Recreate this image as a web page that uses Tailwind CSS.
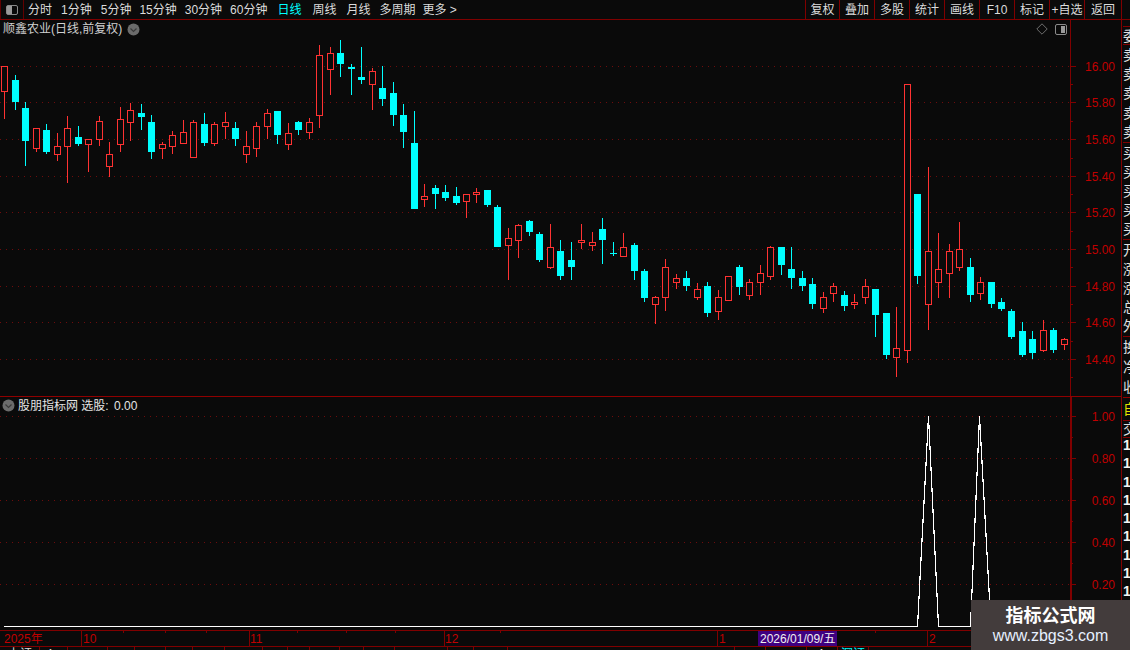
<!DOCTYPE html>
<html lang="zh">
<head>
    <meta charset="UTF-8">
    <title>顺鑫农业</title>
    <script src="https://cdn.jsdelivr.net/npm/@tailwindcss/browser@4"></script>
</head>
<body class="bg-[#0a0a0a]">
<div class="relative w-[1130px] h-[650px] overflow-hidden flex flex-col bg-[#0a0a0a] text-[12px] leading-none text-[#dcdcdc] font-['Liberation_Sans','Noto_Sans_CJK_SC',sans-serif]">

    <!-- toolbar -->
    <div class="h-[20px] shrink-0 flex items-center border-b border-[#800000]">
        <div class="w-[24px] h-full flex items-center justify-center border-x border-[#600000]">
            <div class="w-[12px] h-[10px] rounded-[2px] border border-[#8a8a8a] pr-[5px]"><div class="h-full bg-[#9a9a9a]"></div></div>
        </div>
        <div class="flex items-center gap-[9px] pl-[4px]">
            <span>分时</span><span>1分钟</span><span>5分钟</span><span class="-ml-[1px]">15分钟</span><span class="-ml-[1px]">30分钟</span><span class="-ml-[1px]">60分钟</span>
            <span class="ml-[1px] text-[#00ffff]">日线</span><span class="ml-[2px]">周线</span><span class="ml-[1px]">月线</span><span>多周期</span><span class="-ml-[2px]">更多 &gt;</span>
        </div>
        <div class="ml-auto flex h-full mr-[8px]">
            <div class="w-[34px] flex items-center justify-center border-l border-[#800000]">复权</div>
            <div class="w-[35px] flex items-center justify-center border-l border-[#800000]">叠加</div>
            <div class="w-[35px] flex items-center justify-center border-l border-[#800000]">多股</div>
            <div class="w-[35px] flex items-center justify-center border-l border-[#800000]">统计</div>
            <div class="w-[35px] flex items-center justify-center border-l border-[#800000]">画线</div>
            <div class="w-[35px] flex items-center justify-center border-l border-[#800000]">F10</div>
            <div class="w-[35px] flex items-center justify-center border-l border-[#800000]">标记</div>
            <div class="w-[35px] flex items-center justify-center border-l border-[#800000] whitespace-nowrap">+自选</div>
            <div class="w-[38px] flex items-center justify-center border-x border-[#800000]">返回</div>
        </div>
    </div>

    <div class="flex-1 flex min-h-0">
        <div class="w-[1121px] shrink-0 flex flex-col">
            <!-- price panel -->
            <div class="relative h-[376px] shrink-0">
                <svg id="price" class="block" width="1121" height="376" viewBox="0 20 1121 376" shape-rendering="crispEdges"></svg>
                <div class="absolute left-[3px] top-[3px] flex items-center h-[12px]">
                    <span class="text-[#d0d0d0]">顺鑫农业(日线,前复权)</span>
                    <svg class="ml-[5px]" width="13" height="13" viewBox="0 0 13 13"><circle cx="6.5" cy="6.5" r="6" fill="#6b6b6b"/><path d="M3.5 5.5 L6.5 8.5 L9.5 5.5" fill="none" stroke="#3a3a3a" stroke-width="1.2"/></svg>
                </div>
                <svg class="absolute left-[1036px] top-[3px]" width="12" height="12" viewBox="0 0 12 12"><path d="M6 .8 L11.2 6 L6 11.2 L.8 6 Z" fill="none" stroke="#6e6e6e"/></svg>
                <div class="absolute left-[1055px] top-[4px] w-[12px] h-[11px] rounded-[2px] border border-[#8a8a8a] pl-[5px] py-[1px] pr-[1px]"><div class="h-full bg-[#9a9a9a]"></div></div>
            </div>

            <!-- indicator panel -->
            <div class="relative h-[234px] shrink-0 border-t border-[#900000]">
                <svg id="indicator" class="block" width="1121" height="233" viewBox="0 397 1121 233" shape-rendering="crispEdges"></svg>
                <div class="absolute left-[2px] top-[2px] flex items-center h-[13px]">
                    <svg width="13" height="13" viewBox="0 0 13 13"><circle cx="6.5" cy="6.5" r="6" fill="#6b6b6b"/><path d="M3.5 5.5 L6.5 8.5 L9.5 5.5" fill="none" stroke="#3a3a3a" stroke-width="1.2"/></svg>
                    <span class="ml-[3px] whitespace-pre text-[#e4e4e4]">股朋指标网 选股: <span class="ml-[2px]">0.00</span></span>
                </div>
            </div>

            <!-- time axis -->
            <div class="h-[17px] shrink-0 border-y border-[#800000]">
                <svg id="timeaxis" class="block" width="1121" height="15" viewBox="0 631 1121 15" shape-rendering="crispEdges">
                    <rect x="758" y="631" width="79" height="15" fill="#400080"/>
                    <text x="4" y="643" fill="#c00000" font-size="12">2025年</text>
                    <text x="83" y="643" fill="#c00000" font-size="12">10</text>
                    <text x="250" y="643" fill="#c00000" font-size="12">11</text>
                    <text x="445" y="643" fill="#c00000" font-size="12">12</text>
                    <text x="719" y="643" fill="#c00000" font-size="12">1</text>
                    <text x="929" y="643" fill="#c00000" font-size="12">2</text>
                    <text x="760" y="643" fill="#f0f0f0" font-size="12">2026/01/09/五</text>
                </svg>
            </div>

            <!-- status strip, only its top edge is on screen -->
            <div class="h-[3px] shrink-0 flex overflow-hidden text-[12px]">
                <div class="w-[40px] pl-[8px] pt-[1px] border-r border-[#800000]">上证</div>
                <div class="w-[28px] pl-[6px] pt-[1px] border-r border-[#800000]">4</div>
                <div class="w-[40px] border-r border-[#800000]"></div>
                <div class="w-[27px] border-r border-[#800000]"></div>
                <div class="w-[31px] border-r border-[#800000]"></div>
                <div class="w-[27px] border-r border-[#800000]"></div>
                <div class="w-[32px] border-r border-[#800000]"></div>
                <div class="w-[38px] border-r border-[#800000]"></div>
                <div class="w-[25px] border-r border-[#800000]"></div>
                <div class="w-[22px] border-r border-[#800000]"></div>
                <div class="w-[30px] border-r border-[#800000]"></div>
                <div class="w-[24px] border-r border-[#800000]"></div>
                <div class="w-[31px] border-r border-[#800000]"></div>
                <div class="w-[53px] border-r border-[#800000]"></div>
                <div class="w-[26px] border-r border-[#800000]"></div>
                <div class="w-[34px] border-r border-[#800000]"></div>
                <div class="w-[227px] border-r border-[#800000]"></div>
                <div class="w-[31px] border-r border-[#800000]"></div>
                <div class="w-[41px] border-r border-[#800000]"></div>
                <div class="w-[31px] pl-[10px] pt-[1px] border-r border-[#800000] text-[#f0f0f0]">4</div>
                <div class="w-[31px] pl-[3px] pt-[1px] border-r border-[#800000] text-[#00ffff]">深证</div>
            </div>
        </div>

        <!-- right info column, cut off by the window -->
        <div class="flex-1 min-w-0 overflow-hidden border-l border-[#800000] pl-[1px] text-[14px] text-[#e0e0e0]">
            <div class="h-[6px]"></div>
            <div class="h-[19px] border-y border-[#800000] whitespace-nowrap flex items-center">委</div>
            <div class="h-[97px] flex flex-col justify-around whitespace-nowrap"><div>卖</div><div>卖</div><div>卖</div><div>卖</div><div>卖</div></div>
            <div class="h-[97px] border-t border-[#800000] flex flex-col justify-around whitespace-nowrap"><div>买</div><div>买</div><div>买</div><div>买</div><div>买</div></div>
            <div class="h-[97px] border-t border-[#800000] flex flex-col justify-around whitespace-nowrap"><div>开</div><div>涨</div><div>涨</div><div>总</div><div>外</div></div>
            <div class="h-[61px] border-t border-[#800000] flex flex-col justify-around whitespace-nowrap"><div>换</div><div>净</div><div>收</div></div>
            <div class="h-[23px] border-t border-[#900000] flex items-center whitespace-nowrap text-[#e0e000]">自</div>
            <div class="h-[18px] border-y border-[#800000] flex items-center whitespace-nowrap">交</div>
            <div class="flex flex-col gap-[4.3px] font-bold text-[#f4f4f4]">
                <div>1</div><div>1</div><div>1</div><div>1</div><div>1</div><div>1</div><div>1</div><div>1</div><div>1</div>
            </div>
        </div>
    </div>

    <!-- watermark -->
    <div class="absolute left-[971px] top-[600px] w-[159px] h-[50px] bg-[#433c3c] flex flex-col items-center text-white">
        <div class="mt-[5px] text-[18px] font-bold font-['Noto_Sans_CJK_SC',sans-serif]">指标公式网</div>
        <div class="mt-[5px] text-[16px] text-[#e6f0ff]">www.zbgs3.com</div>
    </div>
</div>

<script>
    const NS = 'http://www.w3.org/2000/svg';
    const RED = '#ff3232', CYAN = '#00ffff', BG = '#0a0a0a', AXIS = '#800000', LABEL = '#c00000', DOT = '#6e0c0c';

    function add(svg, tag, attrs, text) {
        const el = document.createElementNS(NS, tag);
        for (const k in attrs) el.setAttribute(k, attrs[k]);
        if (text) el.textContent = text;
        svg.appendChild(el);
        return el;
    }

    // candles read off 3x crops: [x, color, high, top, bottom, low]
    const groups = [
        { ox: 0, oy: 40, rows: [
            [13,'r',79,79,155,237],[46,'c',105,120,186,210],[76,'c',186,204,303,378],[109,'r',265,265,326,336],
            [139,'c',252,270,336,342],[172,'r',279,319,344,363],[202,'r',228,265,320,429],[235,'c',258,291,312,318],
            [265,'r',298,298,314,396],[298,'r',228,244,299,318],[328,'r',306,343,380,411],[361,'r',201,238,314,336],
            [391,'r',189,211,248,303],[424,'c',192,219,231,270],[454,'c',225,246,336,357],[487,'r',306,313,326,357],
            [517,'r',273,286,320,342],[550,'r',240,277,311,311],[580,'r',240,247,353,353],[613,'c',219,252,309,318],
            [643,'r',246,253,311,318],[676,'r',216,247,260,298],[706,'c',246,264,297,318],[739,'r',273,319,344,369],
            [769,'r',246,259,326,351],[802,'r',207,220,260,297],[832,'c',213,213,285,312],[865,'r',249,280,314,330],
            [895,'c',243,246,270,285],[928,'r',234,247,278,297],[958,'r',15,46,227,264],[991,'r',21,40,89,165],
            [1021,'c',0,39,72,111]
        ]},
        { ox: 0, oy: 0, rows: [
            [1054,'c',192,200,207,285],[1084,'c',141,231,240,252],[1117,'r',204,214,254,330],[1147,'c',198,264,297,318],
            [1180,'c',246,279,345,378],[1210,'c',312,345,396,444],[1243,'c',333,429,627,627]
        ]},
        { ox: 350, oy: 130, rows: [
            [223,'r',162,198,210,231],[256,'c',165,174,192,237],[286,'c',165,186,204,213],[319,'c',171,198,219,225],
            [349,'r',192,192,216,264],[379,'r',174,186,195,219],[412,'c',180,180,225,231],[442,'c',225,231,351,351],
            [475,'r',294,324,348,450],[505,'r',282,285,333,384],[538,'c',270,273,306,318],[568,'c',306,312,390,396],
            [601,'r',282,351,414,417],[631,'c',330,363,438,450],[664,'c',336,390,411,450],[694,'r',282,330,339,357],
            [727,'r',306,336,348,363],[757,'c',264,297,330,402],[790,'c',336,369,372,378],[820,'r',309,351,381,381],
            [853,'c',339,345,423,450],[883,'c',417,423,504,516],[916,'r',498,501,525,582],[946,'r',387,411,504,543],
            [979,'r',432,444,459,477],[1009,'c',423,444,468,483],[1042,'r',459,477,504,510]
        ]},
        { ox: 700, oy: 80, rows: [
            [22,'c',606,618,699,711],[55,'r',630,652,695,720],[85,'r',589,589,662,662],[118,'c',555,561,621,645],
            [148,'r',598,607,647,660],[181,'r',555,580,608,645],[211,'r',498,502,590,600],[244,'c',501,501,555,585],
            [274,'c',501,567,594,627],[307,'c',573,594,618,633],[337,'c',594,612,672,687],[370,'r',636,652,686,699],
            [400,'r',610,619,641,666],[433,'c',633,645,678,693],[463,'r',642,667,674,687],[496,'r',598,619,653,672],
            [526,'c',627,627,705,771],[559,'c',699,699,825,837],[589,'r',681,805,833,891],[622,'r',13,13,812,849],
            [652,'c',342,342,588,612],[685,'r',261,514,674,750],[715,'r',459,568,608,654],[748,'r',492,514,581,654],
            [778,'r',426,508,563,573],[811,'c',534,561,645,666],[841,'r',591,607,641,660],[874,'c',606,606,672,684],
            [904,'c',654,666,687,693],[934,'c',687,693,771,777],[967,'c',726,753,825,831],[997,'c',753,777,819,837],
            [1030,'r',720,751,812,816],[1060,'c',744,750,810,819],[1093,'r',774,778,794,810]
        ]}
    ];

    function axis(svg, x, y0, y1, labels, minors, width) {
        add(svg, 'rect', { x: x, y: y0, width: width, height: y1 - y0, fill: AXIS });
        labels.forEach(([y, t]) => {
            add(svg, 'line', { x1: 0, x2: x, y1: y + .5, y2: y + .5, stroke: DOT, 'stroke-dasharray': '1 5' });
            add(svg, 'rect', { x: x, y: y, width: 6, height: 1, fill: AXIS });
            add(svg, 'text', { x: 1115, y: y + 5, fill: LABEL, 'font-size': 12, 'text-anchor': 'end', 'shape-rendering': 'auto' }, t);
        });
        minors.forEach(y => add(svg, 'rect', { x: x, y: y, width: 3, height: 1, fill: AXIS }));
    }

    const price = document.getElementById('price');
    const priceLabels = [[66,'16.00'],[102,'15.80'],[139,'15.60'],[176,'15.40'],[212,'15.20'],[249,'15.00'],[286,'14.80'],[322,'14.60'],[359,'14.40']];
    axis(price, 1070, 20, 396, priceLabels, [84,121,158,194,231,267,304,341,377], 1);

    groups.forEach(g => g.rows.forEach(([zx, col, hi, top, bot, lo]) => {
        const x = g.ox + Math.floor(zx / 3);
        const y = v => g.oy + Math.round(v / 3);
        const color = col === 'r' ? RED : CYAN;
        add(price, 'rect', { x: x, y: y(hi), width: 1, height: Math.max(y(lo) - y(hi), 1), fill: color });
        if (col === 'r') {
            add(price, 'rect', { x: x - 2.5, y: y(top) + .5, width: 6, height: Math.max(y(bot) - y(top) - 1, 1), fill: BG, stroke: color });
        } else {
            add(price, 'rect', { x: x - 3, y: y(top), width: 7, height: Math.max(y(bot) - y(top), 1), fill: color });
        }
    }));

    const indicator = document.getElementById('indicator');
    axis(indicator, 1070, 397, 630, [[416,'1.00'],[458,'0.80'],[500,'0.60'],[542,'0.40'],[584,'0.20']], [437,479,521,563,605], 2);
    add(indicator, 'polyline', {
        points: '4,626.5 917.5,626.5 928.5,416 938.5,626.5 970.5,626.5 979.5,416 991,626.5 1000,626.5',
        fill: 'none', stroke: '#ffffff', 'stroke-width': 1.2
    });

    // time axis ticks
    const timeaxis = document.getElementById('timeaxis');
    [81, 249, 444, 717, 927].forEach(x => add(timeaxis, 'rect', { x: x, y: 631, width: 1, height: 15, fill: AXIS }));
    [123, 165, 206, 297, 346, 395, 500, 875].forEach(x => add(timeaxis, 'rect', { x: x, y: 631, width: 1, height: 2, fill: AXIS }));
</script>
</body>
</html>
